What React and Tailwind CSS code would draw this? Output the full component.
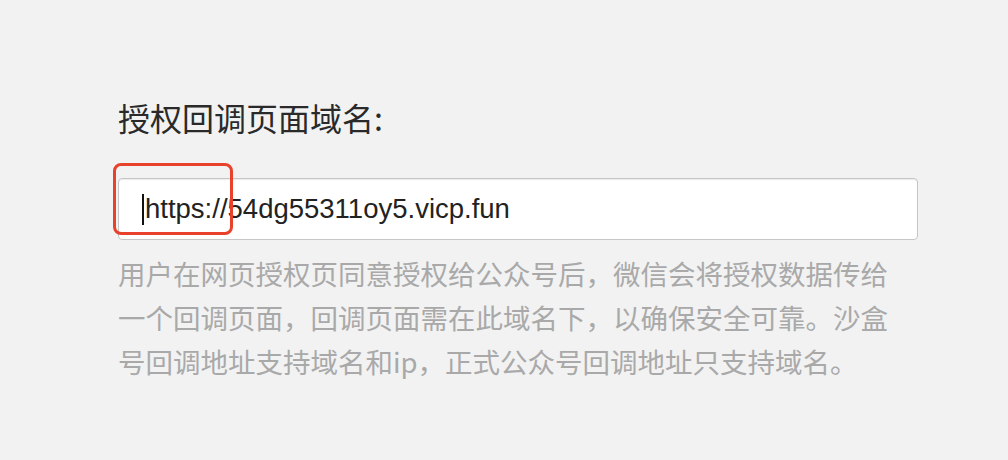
const description =
  "用户在网页授权页同意授权给公众号后，微信会将授权数据传给一个回调页面，回调页面需在此域名下，以确保安全可靠。沙盒号回调地址支持域名和ip，正式公众号回调地址只支持域名。";

const App = () => {
  return (
    <div className="h-[460px] w-[1008px] overflow-hidden bg-[#f2f2f2] pl-[118px] pt-[97px]">
      <div className="w-[800px]">
        <h3 className="text-[32px] leading-[40px] text-[#2a2a2a] font-['Noto_Sans_CJK_SC',sans-serif]">
          授权回调页面域名:
        </h3>

        {/* field with the highlight box drawn over it */}
        <div className="relative mt-[41px]">
          <div className="flex h-[62px] items-center rounded-[4px] border border-[#c6c6c6] bg-white pl-[23px] shadow-[inset_0_1px_1px_rgba(0,0,0,0.08)]">
            <span className="mr-[1px] h-[31px] w-[2px] bg-[#111]" />
            <span className="text-[27.5px] text-[#222] font-['Liberation_Sans',Arial,sans-serif]">
              https://54dg55311oy5.vicp.fun
            </span>
          </div>
          <div className="pointer-events-none absolute left-[-5px] top-[-15px] h-[72px] w-[120px] rounded-[8px] border-[3.5px] border-[#e8412c]" />
        </div>

        <p className="mt-[11px] w-[790px] text-[27.5px] leading-[44px] text-[#a9a9a9] font-['Noto_Sans_CJK_SC',sans-serif]">
          {description}
        </p>
      </div>
    </div>
  );
};

export default App;
